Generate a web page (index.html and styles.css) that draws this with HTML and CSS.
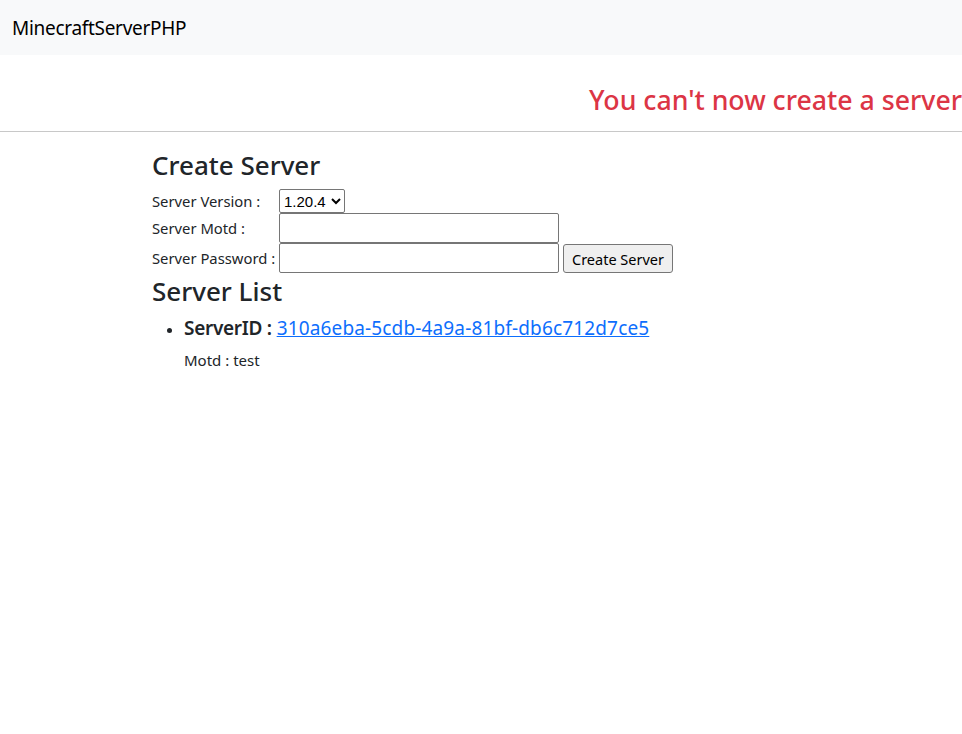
FILE: index.html
```html
<!DOCTYPE html>
<html lang="en">
<head>
<meta charset="utf-8">
<title>MinecraftServerPHP</title>
<link rel="stylesheet" href="styles.css">
</head>
<body>
<nav class="navbar">
  <span class="brand">MinecraftServerPHP</span>
</nav>
<div class="notice">
  <h3 class="danger">You can't now create a server</h3>
</div>
<hr class="rule">
<main class="content">
  <h3 class="title">Create Server</h3>
  <form class="form">
    <label class="lbl">Server Version :</label>
    <div class="field"><select class="sel"><option>1.20.4</option></select></div>
    <label class="lbl">Server Motd :</label>
    <div class="field"><input class="inp" type="text"></div>
    <label class="lbl">Server Password :</label>
    <div class="field"><input class="inp" type="password"><button class="btn" type="button">Create Server</button></div>
  </form>
  <h3 class="title list-title">Server List</h3>
  <ul class="list">
    <li class="item">
      <div class="item-head"><b>ServerID :</b> <a href="#" class="link">310a6eba-5cdb-4a9a-81bf-db6c712d7ce5</a></div>
      <p class="motd">Motd : test</p>
    </li>
  </ul>
</main>
</body>
</html>
```
FILE: styles.css
```css
html, body {
  margin: 0;
  padding: 0;
  background: #fff;
  overflow-x: hidden;
}
body {
  font-family: "Noto Sans", "Open Sans", sans-serif;
  color: #212529;
  font-size: 15px;
}
.navbar {
  background: #f8f9fa;
  height: 55px;
  display: flex;
  align-items: center;
  padding-left: 12px;
}
.brand {
  font-size: 19px;
  color: #000;
  letter-spacing: -0.3px;
}
.notice {
  display: flex;
  justify-content: flex-end;
  height: 76px;
  white-space: nowrap;
}
.danger {
  margin: 0;
  color: #dc3545;
  font-size: 26.7px;
  font-weight: 500;
  line-height: 1.2;
  padding-top: 29px;
}
.rule {
  margin: 0;
  border: 0;
  border-top: 1px solid #c8c8c8;
}
.content {
  padding-left: 152px;
  padding-top: 18px;
}
.title {
  margin: 0;
  font-size: 26px;
  font-weight: 500;
  line-height: 1.2;
}
.form {
  display: grid;
  grid-template-columns: 127px auto;
  justify-content: start;
  align-items: center;
  margin-top: 8px;
}
.lbl {
  font-size: 14.8px;
}
.field {
  display: flex;
  align-items: flex-end;
}
.sel {
  font-family: "Liberation Sans", Arial, sans-serif;
  font-size: 15px;
  height: 24px;
  width: 66px;
  border: 1px solid #767676;
  border-radius: 2px;
  background: #fff;
  color: #000;
}
.inp {
  width: 280px;
  height: 30px;
  box-sizing: border-box;
  border: 1px solid #767676;
  border-radius: 2px;
  margin: 0;
}
.btn {
  margin-left: 4px;
  height: 29px;
  padding: 0 8px;
  font-family: "Noto Sans", sans-serif;
  font-size: 14.5px;
  color: #000;
  background: #efefef;
  border: 1px solid #767676;
  border-radius: 3px;
}
.list-title {
  margin-top: 3px;
}
.list {
  margin: 8px 0 0;
  padding-left: 32px;
}
.item-head {
  font-size: 19px;
}
.item-head b {
  font-weight: 600;
  letter-spacing: -0.3px;
}
.link {
  color: #0d6efd;
  text-decoration: underline;
  letter-spacing: 0.15px;
}
.motd {
  margin: 9px 0 0;
  font-size: 15px;
}
```
